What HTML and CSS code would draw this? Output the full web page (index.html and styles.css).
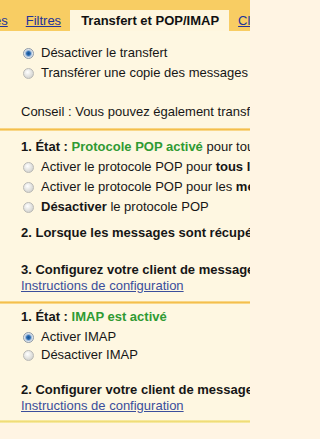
FILE: index.html
```html
<!DOCTYPE html>
<html lang="fr">
<head>
<meta charset="utf-8">
<title>Transfert et POP/IMAP</title>
<link rel="stylesheet" href="styles.css">
</head>
<body>
<div class="page">
  <nav class="tabs">
    <a class="tab tab-cut" href="#">es</a>
    <a class="tab" href="#">Filtres</a>
    <span class="tab tab-active">Transfert et POP/IMAP</span>
    <a class="tab" href="#">Clips</a>
  </nav>

  <section class="sec sec-fwd">
    <div class="row r1"><span class="radio on"></span><span>Désactiver le transfert</span></div>
    <div class="row r2"><span class="radio"></span><span>Transférer une copie des messages entrants à</span></div>
    <p class="line tip">Conseil : Vous pouvez également transférer uniquement certains messages en créant un filtre.</p>
  </section>
  <div class="sep"></div>

  <section class="sec sec-pop">
    <p class="line head"><b>1. État :</b> <b class="ok">Protocole POP activé</b> pour tous les messages déjà arrivés</p>
    <div class="row r1"><span class="radio"></span><span>Activer le protocole POP pour <b>tous les messages</b> (même ceux qui ont déjà été téléchargés)</span></div>
    <div class="row r2"><span class="radio"></span><span>Activer le protocole POP pour les <b>messages reçus à partir de maintenant</b></span></div>
    <div class="row r3"><span class="radio"></span><span><b>Désactiver</b> le protocole POP</span></div>
    <p class="line step2"><b>2. Lorsque les messages sont récupérés via le protocole POP</b></p>
    <p class="line step3"><b>3. Configurez votre client de messagerie</b> (ex. : Outlook, Eudora, Netscape Mail)</p>
    <a class="line link" href="#">Instructions de configuration</a>
  </section>
  <div class="sep"></div>

  <section class="sec sec-imap">
    <p class="line head"><b>1. État :</b> <b class="ok">IMAP est activé</b></p>
    <div class="row r1"><span class="radio on"></span><span>Activer IMAP</span></div>
    <div class="row r2"><span class="radio"></span><span>Désactiver IMAP</span></div>
    <p class="line step2"><b>2. Configurer votre client de messagerie</b> (ex. : Outlook, Thunderbird, iPhone)</p>
    <a class="line link" href="#">Instructions de configuration</a>
  </section>
  <div class="sep sep-yellow"></div>
  <div class="tail"></div>
</div>
</body>
</html>
```
FILE: styles.css
```css
html {
  background: #fff4e3;
}
html, body {
  margin: 0;
  padding: 0;
}
body {
  width: 250px;
  height: 439px;
  overflow: hidden;
  background: #fff4e3;
  font-family: "Liberation Sans", Arial, sans-serif;
  font-size: 13px;
  color: #161616;
}
.page {
  display: flex;
  flex-direction: column;
  overflow: hidden;
}
.tabs {
  display: flex;
  align-items: flex-end;
  height: 31px;
  padding-top: 10px;
  box-sizing: border-box;
  background: #f8cd63;
  white-space: nowrap;
}
.tab {
  display: block;
  line-height: 21px;
  padding: 0 9px;
  color: #23339a;
  text-decoration: underline;
  flex: none;
}
.tab-cut {
  margin-left: -6px;
  padding-left: 0;
}
.tab-active {
  padding: 0 10px 0 11px;
  background: #fef6de;
  color: #111;
  font-weight: bold;
  text-decoration: none;
}
.sec {
  background: #fef7e1;
  display: flex;
  flex-direction: column;
  white-space: nowrap;
}
.line {
  margin: 0;
  line-height: 16px;
  padding-left: 21px;
  display: block;
}
.row {
  display: flex;
  align-items: center;
  gap: 7px;
  line-height: 16px;
  padding-left: 23px;
}
.radio {
  flex: none;
  width: 11px;
  height: 11px;
  border-radius: 50%;
  box-sizing: border-box;
  border: 1px solid #b9b9b6;
  background: radial-gradient(circle at 40% 35%, #ffffff 0%, #e6e6e3 45%, #c6c6c3 100%);
}
.radio.on {
  border-color: #8e9aa8;
  background: radial-gradient(circle at 50% 50%, #17528f 0%, #2a6cb4 30%, #86a9d0 42%, #e2e8ef 64%, #bcc4ce 100%);
}
.ok {
  color: #2f9a33;
}
.link {
  color: #3a4e9c;
  text-decoration: underline;
}
.sep {
  height: 3px;
  background: linear-gradient(#fbe1a0, #f4bf4c 50%, #fbe3a6);
}
.sep-yellow {
  background: linear-gradient(#f8eeaf, #f0dc78 50%, #f8efb5);
}
.tail {
  height: 30px;
  background: #fff4e3;
}

/* forwarding section */
.sec-fwd {
  padding-top: 14px;
  padding-bottom: 8px;
}
.sec-fwd .r2 { margin-top: 4px; }
.sec-fwd .tip { margin-top: 23px; }

/* POP section */
.sec-pop {
  padding-top: 8px;
  padding-bottom: 7px;
}
.sec-pop .r1,
.sec-pop .r2,
.sec-pop .r3 { margin-top: 4px; }
.sec-pop .step2 { margin-top: 10px; }
.sec-pop .step3 { margin-top: 21px; }

/* IMAP section */
.sec-imap {
  padding-top: 5px;
  padding-bottom: 6px;
}
.sec-imap .r1 { margin-top: 4px; }
.sec-imap .r2 { margin-top: 2px; }
.sec-imap .step2 { margin-top: 19px; }
```
